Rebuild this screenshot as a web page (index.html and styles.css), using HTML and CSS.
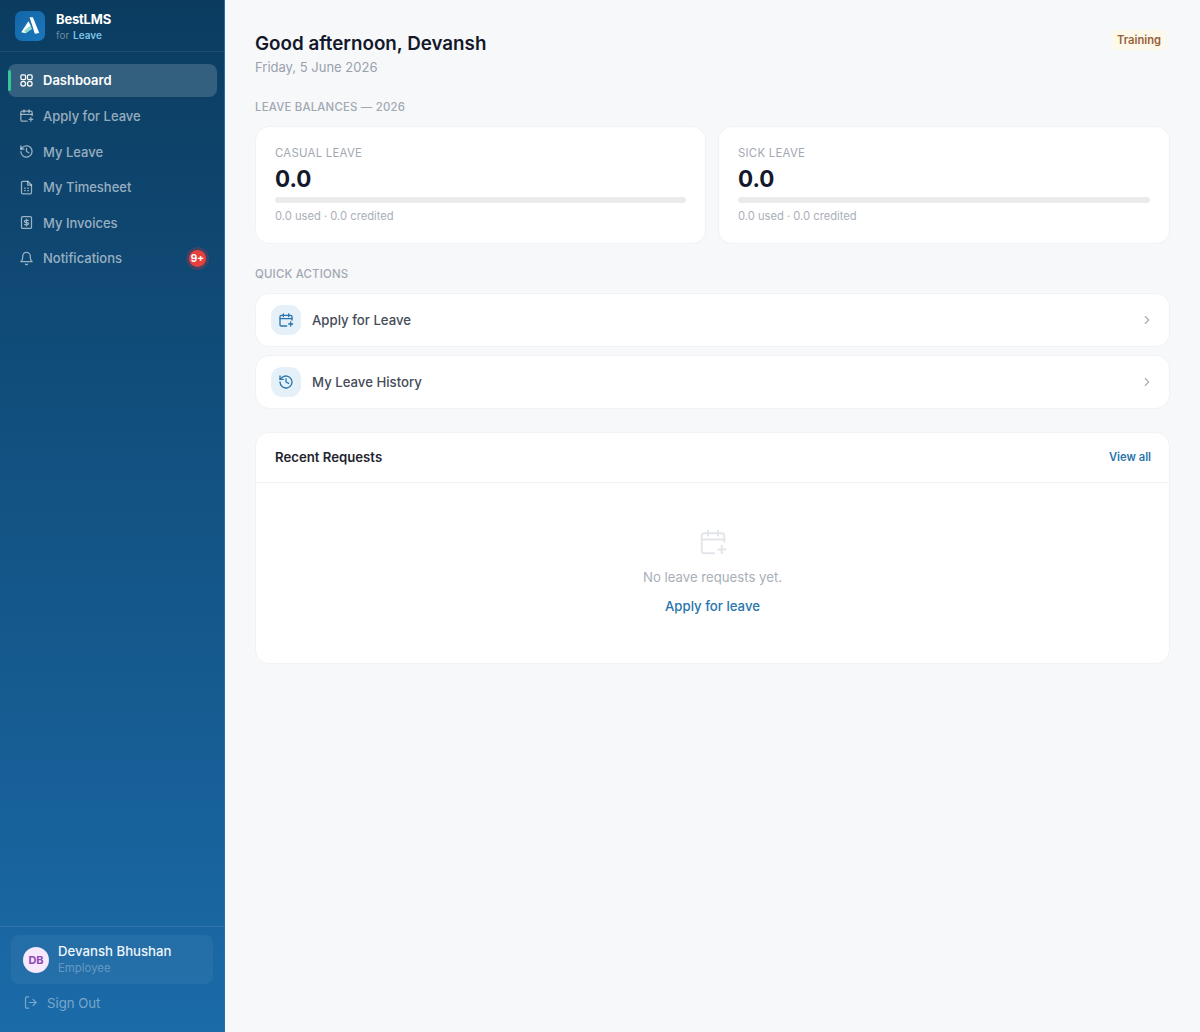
FILE: index.html
```html
<!DOCTYPE html>
<html lang="en">
<head>
<meta charset="utf-8">
<title>BestLMS</title>
<link rel="stylesheet" href="styles.css">
</head>
<body>
<div class="app">
  <aside class="sidebar">
    <div class="brand">
      <div class="logo">
        <svg width="22" height="22" viewBox="0 0 20 20"><path d="M9.6 2 L12.6 2 L18.4 16.4 L14.4 17 Z" fill="#fff"/><path d="M8.6 5.6 L10.8 10 L6 16.6 L2 15.6 Z" fill="#fff"/><path d="M4.6 14.4 L10.6 9.6 L11.9 12.7 L6.2 16.6 Z" fill="#8fdccf"/></svg>
      </div>
      <div class="brand-text">
        <div class="brand-name">BestLMS</div>
        <div class="brand-sub">for <b>Leave</b></div>
      </div>
    </div>
    <nav class="nav">
      <a class="nav-item active">
        <svg class="ico" viewBox="0 0 24 24"><rect x="3" y="3" width="7.5" height="7.5" rx="2"/><rect x="13.5" y="3" width="7.5" height="7.5" rx="2"/><circle cx="6.75" cy="17.25" r="3.75"/><circle cx="17.25" cy="17.25" r="3.75"/></svg>
        <span>Dashboard</span>
      </a>
      <a class="nav-item">
        <svg class="ico" viewBox="0 0 24 24"><path d="M21 12V7a2 2 0 0 0-2-2H5a2 2 0 0 0-2 2v12a2 2 0 0 0 2 2h8"/><path d="M8 3v4M16 3v4M3 10h18M19 15v6M16 18h6"/></svg>
        <span>Apply for Leave</span>
      </a>
      <a class="nav-item">
        <svg class="ico" viewBox="0 0 24 24"><path d="M3 12a9 9 0 1 0 3-6.7L3 8"/><path d="M3 3v5h5M12 7v5l4 2"/></svg>
        <span>My Leave</span>
      </a>
      <a class="nav-item">
        <svg class="ico" viewBox="0 0 24 24"><path d="M14 2H6a2 2 0 0 0-2 2v16a2 2 0 0 0 2 2h12a2 2 0 0 0 2-2V8z"/><path d="M14 2v6h6M9 13h1M14 13h1M9 17h1M14 17h1"/></svg>
        <span>My Timesheet</span>
      </a>
      <a class="nav-item">
        <svg class="ico" viewBox="0 0 24 24"><rect x="4" y="2.5" width="16" height="19" rx="2"/><path d="M15 8.5H10.5a1.75 1.75 0 0 0 0 3.5h3a1.75 1.75 0 0 1 0 3.5H9M12 6.5v11"/></svg>
        <span>My Invoices</span>
      </a>
      <a class="nav-item">
        <svg class="ico" viewBox="0 0 24 24"><path d="M6 8a6 6 0 0 1 12 0c0 7 3 9 3 9H3s3-2 3-9"/><path d="M10.3 21a2 2 0 0 0 3.4 0"/></svg>
        <span>Notifications</span>
        <em class="badge">9+</em>
      </a>
    </nav>
    <div class="side-foot">
      <div class="user">
        <div class="avatar">DB</div>
        <div class="user-text">
          <div class="user-name">Devansh Bhushan</div>
          <div class="user-role">Employee</div>
        </div>
      </div>
      <a class="signout">
        <svg class="ico" viewBox="0 0 24 24"><path d="M9 21H6a2 2 0 0 1-2-2V5a2 2 0 0 1 2-2h3M16 17l5-5-5-5M21 12H10"/></svg>
        <span>Sign Out</span>
      </a>
    </div>
  </aside>
  <main class="main">
    <header class="top">
      <div>
        <h1>Good afternoon, Devansh</h1>
        <p class="date">Friday, 5 June 2026</p>
      </div>
      <span class="env">Training</span>
    </header>
    <h2 class="section">LEAVE BALANCES — 2026</h2>
    <div class="balances">
      <div class="card balance">
        <div class="bal-label">CASUAL LEAVE</div>
        <div class="bal-value">0.0</div>
        <div class="bar"></div>
        <div class="bal-note">0.0 used · 0.0 credited</div>
      </div>
      <div class="card balance">
        <div class="bal-label">SICK LEAVE</div>
        <div class="bal-value">0.0</div>
        <div class="bar"></div>
        <div class="bal-note">0.0 used · 0.0 credited</div>
      </div>
    </div>
    <h2 class="section quick">QUICK ACTIONS</h2>
    <div class="actions">
      <a class="card action">
        <span class="action-ico"><svg class="ico" viewBox="0 0 24 24"><path d="M21 12V7a2 2 0 0 0-2-2H5a2 2 0 0 0-2 2v12a2 2 0 0 0 2 2h8"/><path d="M8 3v4M16 3v4M3 10h18M19 15v6M16 18h6"/></svg></span>
        <span class="action-label">Apply for Leave</span>
        <svg class="chev" viewBox="0 0 24 24"><path d="M9 6l6 6-6 6"/></svg>
      </a>
      <a class="card action">
        <span class="action-ico"><svg class="ico" viewBox="0 0 24 24"><path d="M3 12a9 9 0 1 0 3-6.7L3 8"/><path d="M3 3v5h5M12 7v5l4 2"/></svg></span>
        <span class="action-label">My Leave History</span>
        <svg class="chev" viewBox="0 0 24 24"><path d="M9 6l6 6-6 6"/></svg>
      </a>
    </div>
    <section class="card recent">
      <div class="recent-head">
        <h3>Recent Requests</h3>
        <a class="view-all">View all</a>
      </div>
      <div class="empty">
        <svg class="empty-ico" viewBox="0 0 24 24"><path d="M21 12V7a2 2 0 0 0-2-2H5a2 2 0 0 0-2 2v12a2 2 0 0 0 2 2h8"/><path d="M8 3v4M16 3v4M3 10h18M19 15v6M16 18h6"/></svg>
        <p>No leave requests yet.</p>
        <a>Apply for leave</a>
      </div>
    </section>
  </main>
</div>
</body>
</html>
```
FILE: styles.css
```css
* { box-sizing: border-box; }
html, body { margin: 0; height: 100%; }
body { font-family: Inter, "Liberation Sans", sans-serif; background: #f7f8fa; color: #111827; }
h1, h2, h3, p { margin: 0; }
.app { display: flex; height: 1032px; overflow: hidden; }
.ico { width: 16px; height: 16px; fill: none; stroke: currentColor; stroke-width: 2; stroke-linecap: round; stroke-linejoin: round; flex: none; }

.sidebar { width: 225px; flex: none; display: flex; flex-direction: column; background: linear-gradient(180deg, #0b3c60 0%, #1b6ba9 100%); border-right: 1px solid #2c6f9f; }
.brand { height: 52px; display: flex; align-items: center; gap: 11px; padding: 0 15px; border-bottom: 1px solid rgba(255,255,255,.07); }
.logo { width: 30px; height: 30px; border-radius: 7px; background: linear-gradient(135deg, #1266a6, #1b77bd); display: flex; align-items: center; justify-content: center; }
.brand-text { padding-top: 2px; }
.brand-name { font-size: 13px; font-weight: 700; color: #fff; line-height: 16px; letter-spacing: -.2px; }
.brand-sub { font-size: 10px; line-height: 14px; margin-top: 1px; color: rgba(255,255,255,.4); }
.brand-sub b { color: #7cc4ea; font-weight: 600; margin-left: 1px; }
.nav { flex: 1; display: flex; flex-direction: column; gap: 2px; padding: 11.6px 7px 12px 8px; }
.nav-item { position: relative; display: flex; align-items: center; gap: 9px; height: 33.6px; padding: 0 11px; border-radius: 8px; font-size: 13px; font-weight: 500; color: rgba(255,255,255,.58); }
.nav-item .ico { width: 15px; height: 15px; stroke-width: 2; }
.nav-item.active { background: rgba(255,255,255,.17); color: #fff; font-weight: 600; }
.nav-item.active::before { content: ""; position: absolute; left: 0; top: 6px; bottom: 6px; width: 3px; border-radius: 2px; background: #34c79a; }
.badge { margin-left: auto; margin-right: 0; width: 17px; height: 17px; border-radius: 50%; background: #e8403f; color: #fff; font-style: normal; font-size: 10px; font-weight: 700; display: flex; align-items: center; justify-content: center; box-shadow: 0 0 0 3px rgba(229,56,59,.22); }
.side-foot { padding: 8px 11px 13px; border-top: 1px solid rgba(255,255,255,.09); }
.user { height: 49px; display: flex; align-items: center; gap: 10px; padding: 0 12px; border-radius: 8px; background: rgba(255,255,255,.05); }
.avatar { width: 26px; height: 26px; border-radius: 50%; background: #f5e9fb; color: #9147b8; font-size: 11px; font-weight: 700; display: flex; align-items: center; justify-content: center; flex: none; }
.user-name { font-size: 13.2px; font-weight: 500; color: #eef6fc; line-height: 17px; }
.user-role { font-size: 11.4px; color: rgba(255,255,255,.3); line-height: 17px; }
.user-text { margin-left: -1px; }
.signout { display: flex; align-items: center; gap: 9px; height: 33px; margin-top: 2px; padding: 0 12px; font-size: 13.2px; color: rgba(255,255,255,.42); }
.signout .ico { width: 15px; height: 15px; stroke-width: 1.9; }

.main { flex: 1; padding: 32px 30px 0; min-width: 0; }
.top { display: flex; justify-content: space-between; align-items: flex-start; }
h1 { font-size: 18.8px; font-weight: 600; line-height: 24px; color: #14182b; }
.date { font-size: 13px; line-height: 17px; margin-top: 3px; color: #9aa1ad; }
.env { margin-top: -2px; margin-right: 4px; padding: 2px 5px; border-radius: 4px; background: #fdf9ea; color: #96603a; font-size: 11.2px; font-weight: 600; line-height: 16px; }
.section { font-size: 11.4px; font-weight: 500; line-height: 15px; letter-spacing: .2px; color: #a2a8b2; margin-top: 24px; }
.balances { display: grid; grid-template-columns: 451px 1fr; gap: 12px; margin-top: 11px; }
.card { background: #fff; border: 1px solid #f0f2f5; border-radius: 14px; }
.balance { height: 118px; padding: 19px 19px 0; }
.bal-label { font-size: 11.4px; line-height: 15px; letter-spacing: .25px; color: #a2a8b2; }
.bal-value { font-size: 22.4px; font-weight: 700; line-height: 30px; margin-top: 3px; color: #14182b; }
.bar { height: 6px; border-radius: 3px; background: #e9ebed; margin-top: 3px; }
.bal-note { font-size: 11.2px; line-height: 15px; margin-top: 6px; color: #a9afb8; }
.quick { margin-top: 23px; }
.actions { display: flex; flex-direction: column; gap: 8px; margin-top: 11px; }
.action { height: 54px; display: flex; align-items: center; gap: 11px; padding: 0 15px; }
.action-ico { width: 30px; height: 30px; border-radius: 11px; background: #e6f0f8; color: #2a75ad; display: flex; align-items: center; justify-content: center; flex: none; }
.action-label { font-size: 13.2px; font-weight: 500; color: #454c58; flex: 1; }
.chev { width: 14px; height: 14px; fill: none; stroke: #a9afb8; stroke-width: 2; stroke-linecap: round; stroke-linejoin: round; }
.recent { margin-top: 23px; height: 232px; }
.recent-head { height: 50px; display: flex; align-items: center; justify-content: space-between; padding: 0 18px 2px 19px; border-bottom: 1px solid #f0f2f5; }
h3 { font-size: 13.2px; font-weight: 600; color: #1f2530; }
.view-all { font-size: 11.2px; font-weight: 600; color: #2a75ad; }
.empty { display: flex; flex-direction: column; align-items: center; padding-top: 44px; }
.empty-ico { width: 30px; height: 30px; fill: none; stroke: #e2e5e9; stroke-width: 1.5; stroke-linecap: round; stroke-linejoin: round; }
.empty p { font-size: 13.2px; line-height: 17px; margin-top: 12px; color: #a9afb8; }
.empty a { font-size: 13.2px; font-weight: 500; line-height: 17px; margin-top: 12px; color: #2a75ad; }
```
